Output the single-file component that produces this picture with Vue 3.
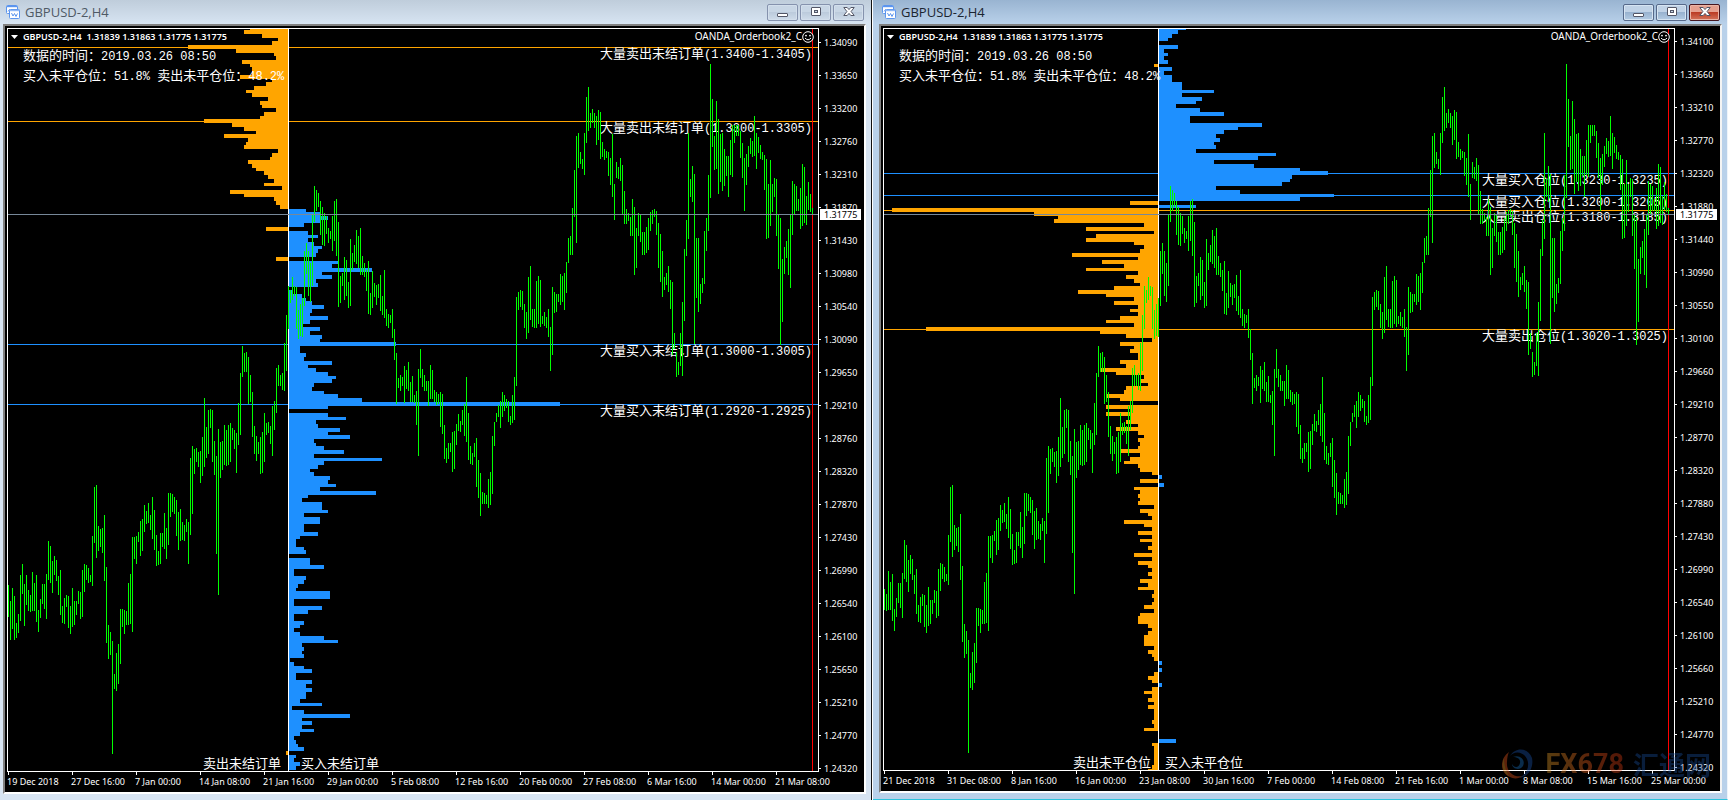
<script setup>
// Candle ranges as [high, low] pairs, three units per plot pixel, measured from `base`.
const candleGroups = [
  { base: 1200, bars: [
    555,651, 603,720, 564,687, 588,720, 669,714, 642,699, 525,663, 492,582, 552,678, 525,615,
    570,633, 585,636, 516,633, 549,633, 525,666, 630,696, 597,654, 552,612, 552,627, 522,657,
    423,540, 438,549, 483,579, 468,525, 480,543, 528,585, 510,645, 618,669, 594,672, 585,621,
    588,684, 618,702, 564,681, 603,675, 603,645, 573,612, 576,657, 510,651, 492,576, 495,540,
    504,549, 525,546, 408,558, 261,429, 255,474, 378,453, 387,441, 384,459, 345,543, 501,729,
    675,777, 696,765, 723,1062, 822,867, 759,873, 732,852, 627,792, 627,681, 630,702, 633,675,
    549,675, 522,672, 411,696, 411,477, 408,492, 396,426, 363,468, 357,453, 315,396, 333,372,
    309,369, 345,390, 291,417, 330,450, 405,498, 453,495, 399,492, 399,441, 339,447, 384,477,
    279,435, 279,351, 282,336, 291,342, 300,408, 336,450, 327,423, 366,420, 375,423, 357,396,
    366,492, 174,405, 138,342, 147,222, 144,186, 156,201, 153,249, 111,228, -6,201, 81,174,
    30,162, 27,84, 30,186, 123,225, 168,462, 87,585, 126,234, 123,210, 75,195, 90,198,
    75,195, 69,186, 84,120, 90,147, 99,219, 9,135, -81,105, -162,-69, -141,-84, -144,-84,
    -129,12, -75,6, -24,111, 78,162, 108,183, 126,162, 111,222, 96,219, 39,186, 69,105,
    66,99, 78,132, 18,168, 3,90, -96,39
  ] },
  { base: 0, bars: [
    1095,1158, 1125,1158, 1119,1170, 1029,1173, 945,1113, 858,987, 871,909, 831,900, 858,888,
    861,987, 930,1017, 912,1008, 894,1011, 753,918, 729,822, 753,888, 789,906, 645,858, 558,666,
    570,633, 579,621, 603,705, 621,735, 639,738, 648,702, 684,729, 693,717, 648,753, 603,723,
    597,768, 666,921, 828,909, 819,858, 771,900, 780,888, 845,924, 717,918, 759,810, 735,786,
    690,792, 708,804, 684,825, 768,825, 789,831, 810,873, 783,942, 879,945, 813,924, 849,891,
    855,915, 852,894, 825,933, 888,945, 810,954, 927,978, 942,984, 945,969, 927,1014, 987,1080,
    1059,1212, 1134,1164, 1125,1173, 1131,1158, 1098,1209, 1110,1167, 1086,1173, 1146,1206,
    1128,1206, 1185,1209, 1173,1275, 1107,1368, 1047,1134, 1107,1161, 1125,1173, 1143,1173,
    1143,1218, 1095,1197, 1110,1197, 1170,1206, 1176,1215, 1182,1212, 1176,1281, 1182,1302,
    1275,1377, 1344,1389, 1329,1377, 1329,1356, 1296,1416, 1293,1407, 1272,1335, 1242,1293,
    1263,1296, 1230,1275, 1212,1308, 1131,1326, 1239,1380, 1338,1392, 1359,1395, 1329,1371,
    1314,1461, 1380,1494, 1419,1548, 1476,1512, 1479,1512, 1485,1512, 1437,1524, 1416,1515,
    1308,1482, 1266,1338, 1239,1266, 1215,1251, 1203,1284, 1176,1251, 1185,1233, 1197,1224,
    1203,1266, 1248,1275, 1185,1269, 1131,1260, 891,1158, 876,930, 870,921, 873,930, 912,984,
    936,1017, 831,999, 798,960, 927,981, 927,984, 843,984, 828,972, 840,981, 948,972, 936,978,
    951,984, 927,1011, 981,1113, 861,1065, 876,939, 882,936, 882,906, 822,915, 828,906, 819,930,
    786,879, 714,789, 708,765, 624,765, 510,651, 408,729, 399,504, 456,492, 477,507, 399,525,
    291,429, 261,393, 339,384, 327,369, 339,384, 348,435, 330,420, 336,477, 426,471, 447,480,
    453,474, 456,528, 474,555, 402,591, 552,660, 486,534, 501,537, 474,543, 495,642, 573,672,
    627,672, 639,663, 651,708, 597,708, 621,825, 684,804, 639,708, 645,726, 696,765, 696,765,
    681,759, 654,750, 636,693, 630,672, 627,651, 633,705, 669,804, 702,846, 753,891, 831,870,
    819,855, 798,876, 840,927, 846,1065, 999,1047, 1056,1131, 1086,1125, 999,1098, 906,1128,
    747,963, 660,768, 399,717, 537,591, 498,606, 522,1032, 714,894, 714,936, 852,912, 834,879,
    693,852, 654,753, 525,693, 192,594, 297,441, 408,510, 303,507, 357,582, 402,546, 399,573,
    447,558, 468,528, 468,591, 420,525, 375,531, 375,429, 375,408, 375,408, 393,474, 429,534,
    474,633, 462,555, 438,501, 414,462, 423,471, 348,468, 399,507, 411,459, 435,477, 456,480,
    465,570, 477,717, 552,714, 480,678, 552,636, 534,591, 537,708, 642,807, 654,1035, 777,966,
    741,822, 723,774, 687,825, 642,864, 543,705, 552,645, 558,633, 597,633, 564,687, 492,678,
    501,669, 588,675, 546,630, 582,636, 624,645
  ] }
]

const candles = candleGroups.flatMap(({ base, bars }) => {
  const out = []
  for (let i = 0; i < bars.length; i += 2) {
    out.push([(bars[i] + base) / 3 - 29, (bars[i + 1] + base) / 3 - 29])
  }
  return out
})

// Order book levels, one per five pips: positive = buy side, negative = sell side.
const orderLevels = [
  -38,-44,-26,-10,-16,
  -100,-52,-14,-12,-46,-38,-36,-36,-48,-16,-22,-34,-42,-36,-20,-28,-26,-12,-24,-28,
  -84,-56,-44,-32,-64,-40,-42,-44,-10,-16,-18,-40,-36,-32,-24,-20,-14,-24,-6,-58,
  -44,-14,-12,-8,17,32,39,31,15,-22,19,29,19,25,33,29,27,-12,49,43,
  83,33,43,27,29,0,3,13,17,23,35,23,21,39,21,14,31,21,33,31,
  107,11,11,17,15,43,19,27,39,47,43,25,23,35,49,73,271,39,0,39,
  57,27,29,51,39,61,25,27,35,55,25,93,35,29,21,25,41,39,47,31,
  87,19,13,33,33,39,15,31,31,15,15,29,11,7,7,15,17,0,21,21,
  35,5,5,17,15,9,7,41,41,5,5,33,19,5,5,15,11,5,11,35,
  49,13,15,13,15,1,5,15,23,7,7,23,17,23,17,17,11,33,3,15,
  61,13,23,13,25,11,5,7,9,15,-2,7,5,11,7
]
const positionLevels = [
  27,19,13,9,0,
  19,5,9,5,9,-4,13,5,13,13,23,23,55,23,43,37,17,41,65,31,
  31,103,79,65,57,61,55,57,37,117,99,55,95,141,169,133,131,123,57,81,
  175,141,-28,37,-266,-124,-100,-104,-14,-72,-4,-62,-72,-24,-14,-18,-86,-20,-56,-34,
  -72,-20,-32,-24,-18,-44,-80,-52,-24,-44,-20,-28,-20,-38,-52,-24,-232,-58,-32,-6,
  -38,-24,-28,-20,-20,-38,-32,-58,-42,-14,-18,-10,-32,-34,-52,-38,0,-52,-28,-52,
  -28,-32,-20,-42,-20,-14,-20,-18,-20,-38,-18,-28,-34,-20,-18,-6,3,-18,5,-24,
  -18,-20,-18,-20,-4,-18,-10,-6,-34,-14,-6,-20,-6,-18,-6,-10,-6,-24,-6,-20,
  -10,-6,-10,-6,-18,-10,-20,-4,-6,-4,-6,-14,-4,-18,-20,-20,-10,-6,-10,-14,
  -14,-14,-4,-10,-6,-4,3,0,3,-4,-10,-6,3,-6,-14,-6,-10,-4,-10,-4,
  -4,-4,-6,-4,-14,0,0,17,-6,-4,-4,-4,-4,-4,-6,-10
]

function levelRects(levels, pitch, axis, height) {
  return levels.flatMap((value, i) => {
    if (!value) return []
    const top = Math.max(0, Math.round(16.1 + (i - 5) * pitch))
    const bottom = Math.min(height, Math.round(16.1 + (i - 4) * pitch))
    return [{
      x: value < 0 ? axis + value : axis + 1,
      y: top,
      w: Math.abs(value),
      h: bottom - top,
      side: value < 0 ? 'sell' : 'buy'
    }]
  })
}

function candlePath(list, scale) {
  const y = (v) => Math.round(185 + (v - 185) * scale)
  return list.map(([high, low], i) => `M${i * 2} ${y(high)}h1V${y(low)}h-1z`).join('')
}

const charts = [
  {
    id: 'orders',
    active: false,
    width: 810,
    height: 742,
    axis: 280,
    nowX: 804,
    rects: levelRects(orderLevels, 3.7155, 280, 742),
    candles: candlePath(candles, 1),
    lines: [
      { y: 18, side: 'sell', name: '大量卖出未结订单', range: '(1.3400-1.3405)' },
      { y: 92, side: 'sell', name: '大量卖出未结订单', range: '(1.3300-1.3305)' },
      { y: 315, side: 'buy', name: '大量买入未结订单', range: '(1.3000-1.3005)' },
      { y: 375, side: 'buy', name: '大量买入未结订单', range: '(1.2920-1.2925)' }
    ],
    sellCaption: '卖出未结订单',
    buyCaption: '买入未结订单',
    prices: ['1.34090', '1.33650', '1.33200', '1.32760', '1.32310', '1.31870', '1.31430', '1.30980', '1.30540', '1.30090', '1.29650', '1.29210', '1.28760', '1.28320', '1.27870', '1.27430', '1.26990', '1.26540', '1.26100', '1.25650', '1.25210', '1.24770', '1.24320'],
    dates: ['19 Dec 2018', '27 Dec 16:00', '7 Jan 00:00', '14 Jan 08:00', '21 Jan 16:00', '29 Jan 00:00', '5 Feb 08:00', '12 Feb 16:00', '20 Feb 00:00', '27 Feb 08:00', '6 Mar 16:00', '14 Mar 00:00', '21 Mar 08:00']
  },
  {
    id: 'positions',
    active: true,
    width: 790,
    height: 741,
    axis: 274,
    nowX: 784,
    rects: levelRects(positionLevels, 3.71, 274, 741),
    candles: candlePath(candles.slice(10), 0.9983),
    lines: [
      { y: 144, side: 'buy', name: '大量买入仓位', range: '(1.3230-1.3235)' },
      { y: 166, side: 'buy', name: '大量买入仓位', range: '(1.3200-1.3205)' },
      { y: 181, side: 'sell', name: '大量卖出仓位', range: '(1.3180-1.3185)' },
      { y: 300, side: 'sell', name: '大量卖出仓位', range: '(1.3020-1.3025)' }
    ],
    sellCaption: '卖出未平仓位',
    buyCaption: '买入未平仓位',
    prices: ['1.34100', '1.33660', '1.33210', '1.32770', '1.32320', '1.31880', '1.31440', '1.30990', '1.30550', '1.30100', '1.29660', '1.29210', '1.28770', '1.28320', '1.27880', '1.27430', '1.26990', '1.26540', '1.26100', '1.25660', '1.25210', '1.24770', '1.24320'],
    dates: ['21 Dec 2018', '31 Dec 08:00', '8 Jan 16:00', '16 Jan 00:00', '23 Jan 08:00', '30 Jan 16:00', '7 Feb 00:00', '14 Feb 08:00', '21 Feb 16:00', '1 Mar 00:00', '8 Mar 08:00', '15 Mar 16:00', '25 Mar 00:00']
  }
]

const percent = (value, total) => `${(value / total) * 100}%`
</script>

<template>
  <main class="desktop">
    <section
      v-for="chart in charts"
      :key="chart.id"
      class="window"
      :class="[chart.id, { active: chart.active }]"
    >
      <header class="titlebar">
        <svg class="app-icon" viewBox="0 0 14 14" aria-hidden="true">
          <rect x="0.5" y="0.5" width="11" height="8" rx="1" fill="#fff" stroke="#5b95ee" />
          <path d="M1 1.5H11" stroke="#5b95ee" stroke-width="1.4" />
          <path d="M2 6.5L3.5 4.5L5 6L6.5 4L8 5.5" fill="none" stroke="#5b95ee" />
          <rect x="3.5" y="4.5" width="10" height="9" rx="1" fill="#fff" stroke="#5b95ee" />
          <path d="M4 5.5H13" stroke="#8fb8f5" stroke-width="1.4" />
          <path d="M5.5 8L7 11L8.5 8.5L10 11.5L11.5 8.5" fill="none" stroke="#5b95ee" />
        </svg>
        <h1 class="title">GBPUSD-2,H4</h1>
        <div class="controls">
          <button type="button" class="control" aria-label="Minimize">
            <svg viewBox="0 0 12 12"><rect x="0.5" y="7.5" width="10" height="3" rx="0.5" class="glyph" /></svg>
          </button>
          <button type="button" class="control" aria-label="Restore">
            <svg viewBox="0 0 12 12">
              <rect x="1.5" y="1.5" width="9" height="8" rx="0.5" class="glyph" />
              <rect x="4.5" y="4.5" width="3" height="2" class="hole" />
            </svg>
          </button>
          <button type="button" class="control close" aria-label="Close">
            <svg viewBox="0 0 12 12">
              <path d="M0.8 1.5H4.2L6 3.6L7.8 1.5H11.2L8.1 5.5L11.2 9.5H7.8L6 7.4L4.2 9.5H0.8L3.9 5.5Z" class="glyph" />
            </svg>
          </button>
        </div>
      </header>

      <div class="client">
        <div class="plot-frame">
          <svg class="layer" :viewBox="`0 0 ${chart.width} ${chart.height}`" preserveAspectRatio="none" aria-hidden="true">
            <rect
              v-for="(r, i) in chart.rects"
              :key="i"
              :x="r.x"
              :y="r.y"
              :width="r.w"
              :height="r.h"
              :class="r.side"
            />
            <rect
              v-for="line in chart.lines"
              :key="line.y"
              x="0"
              :y="line.y"
              :width="chart.width"
              height="1"
              :class="line.side"
            />
            <rect :x="chart.axis" y="0" width="1" :height="chart.height" fill="#fff" />
            <rect :x="chart.nowX" y="0" width="1" :height="chart.height" fill="#f00" />
          </svg>

          <div class="plot-head">
            <svg class="arrow" viewBox="0 0 7 4" aria-hidden="true"><path d="M0 0H7L3.5 4Z" fill="#fff" /></svg>
            <span class="quote">GBPUSD-2,H4&nbsp; 1.31839 1.31863 1.31775 1.31775</span>
            <span class="expert">OANDA_Orderbook2_C</span>
            <svg class="smiley" viewBox="0 0 12 12" aria-hidden="true">
              <circle cx="6" cy="6" r="5.3" fill="#000" stroke="#fff" />
              <circle cx="4" cy="4.6" r="0.9" fill="#fff" />
              <circle cx="8" cy="4.6" r="0.9" fill="#fff" />
              <path d="M3 7Q6 10.5 9 7" fill="none" stroke="#fff" />
            </svg>
          </div>
          <p class="info">数据的时间：<span class="num">2019.03.26 08:50</span></p>
          <p class="info">买入未平仓位：<span class="num">51.8% </span>卖出未平仓位：<span class="num">48.2%</span></p>

          <p
            v-for="line in chart.lines"
            :key="line.range"
            class="level-label"
            :style="{ top: percent(line.y, chart.height) }"
          >{{ line.name }}<span class="num">{{ line.range }}</span></p>
          <p class="caption sell-caption" :style="{ right: percent(chart.width - chart.axis, chart.width) }">{{ chart.sellCaption }}</p>
          <p class="caption buy-caption" :style="{ left: percent(chart.axis, chart.width) }">{{ chart.buyCaption }}</p>

          <svg class="layer" :viewBox="`0 0 ${chart.width} ${chart.height}`" preserveAspectRatio="none" role="img" aria-label="GBPUSD H4">
            <path :d="chart.candles" fill="#0f0" />
            <rect x="0" y="185" :width="chart.width" height="1" fill="#778899" />
          </svg>
        </div>

        <ol class="dates">
          <li v-for="date in chart.dates" :key="date">{{ date }}</li>
        </ol>

        <div class="price-axis">
          <ol class="prices">
            <li v-for="price in chart.prices" :key="price">{{ price }}</li>
          </ol>
          <span class="price-now">1.31775</span>
        </div>

        <div v-if="chart.active" class="watermark">
          <svg class="swirl" viewBox="0 0 32 32" aria-hidden="true">
            <path d="M8 4C-2 11-1 25 9 29C12 31 18 31 22 28C12 30 5 23 6 14C6 10 7 6 8 4Z" fill="#f05a1e" />
            <path d="M3 10C0 18 2 25 8 28C4 22 3 16 3 10Z" fill="#f5a52a" />
            <path d="M9 8C14-1 27-1 31 10C33 20 27 29 18 30C26 26 29 18 26 11C22 3 13 3 9 8Z" fill="#1b55ae" />
            <path d="M12 9C19 6 25 12 22 18C19 23 11 21 11 16C13 20 18 20 19 15C20 11 16 9 12 9Z" fill="#1b75c4" />
          </svg>
          <span class="brand">FX678</span>
          <span class="brand-cn">汇通网</span>
        </div>
      </div>
    </section>
  </main>
</template>

<style>
body {
  margin: 0;
  background: #d7e4f2;
}
</style>

<style scoped>
.desktop {
  display: grid;
  grid-template-columns: minmax(0, 873fr) minmax(0, 855fr);
  height: 100vh;
  min-height: 480px;
  overflow: hidden;
}
.window {
  box-sizing: border-box;
  display: flex;
  flex-direction: column;
  min-width: 0;
  background: #d7e4f2;
}
.orders {
  padding: 0 6px 6px 3px;
  border-right: 1px solid #fff;
  box-shadow: inset -1px 0 #111;
}
.positions {
  padding: 0 5px 6px 6px;
  border-right: 1px solid #eef4fb;
  border-bottom: 1px solid #2fc4dd;
  background: #b9d1ea;
}
.titlebar {
  display: flex;
  align-items: center;
  height: 24px;
  flex: none;
  box-sizing: border-box;
  margin: 0 -5px 0 -3px;
  padding-left: 6px;
  background: linear-gradient(#bfcddb, #d7e4f2);
}
.active .titlebar {
  margin: 0 -5px 0 -6px;
  background: linear-gradient(#99b4d1, #b9d1ea);
  padding-left: 9px;
}
.app-icon {
  width: 14px;
  height: 14px;
}
.title {
  flex: 1;
  margin: 0 0 0 5px;
  font: 400 13px/18px "Open Sans", "Noto Sans", sans-serif;
  color: #4f5a66;
}
.active .title {
  color: #1b2530;
}
.controls {
  display: flex;
  gap: 2px;
  padding-right: 7px;
}
.control {
  display: flex;
  align-items: center;
  justify-content: center;
  box-sizing: border-box;
  width: 31px;
  height: 17px;
  padding: 0;
  border: 1px solid #8592ad;
  border-radius: 2px;
  background: linear-gradient(#c8d6e5 50%, #bccbdc 50%, #cfdcea);
  box-shadow: inset 0 0 0 1px #d3dfec;
}
.active .control {
  border-color: #56698a;
  background: linear-gradient(#c0d2e6 50%, #98b2cf 50%, #b4cce4);
  box-shadow: inset 0 0 0 1px #d6e4f2;
}
.active .close {
  border-color: #451620;
  background: linear-gradient(#e5a08f 45%, #bb3c25 50%, #d4745b);
  box-shadow: inset 0 0 0 1px #eab5a6;
}
.control svg {
  width: 12px;
  height: 12px;
}
.glyph {
  fill: #fff;
  stroke: #535666;
}
.hole {
  fill: #c8d6e5;
  stroke: #535666;
}
.client {
  position: relative;
  flex: 1;
  min-height: 0;
  display: grid;
  grid-template-columns: minmax(0, 1fr) 45px;
  grid-template-rows: minmax(0, 1fr) 20px;
  padding: 2px 0 0 2px;
  border: 2px solid #fff;
  border-top-color: #808080;
  border-left-color: #808080;
  background: #000;
  color: #fff;
  font: 400 9px/11px "Noto Sans", "Open Sans", sans-serif;
}
.active .client {
  border-right-color: #f4f4f4;
}
.plot-frame {
  position: relative;
  border: 1px solid #fff;
  overflow: hidden;
}
.layer {
  position: absolute;
  inset: 0;
  width: 100%;
  height: 100%;
  shape-rendering: crispEdges;
}
.buy {
  fill: #1e90ff;
}
.sell {
  fill: #ffa500;
}
.plot-head {
  position: relative;
  display: flex;
  align-items: center;
  height: 15px;
  margin-bottom: 1px;
  padding: 0 4px 0 3px;
  white-space: nowrap;
}
.arrow {
  width: 7px;
  height: 4px;
  margin-right: 5px;
}
.quote {
  flex: 1;
  font-weight: 600;
}
.expert {
  font-size: 10px;
}
.smiley {
  width: 12px;
  height: 12px;
}
.info,
.level-label,
.caption {
  margin: 0;
  font: 400 13px/12px "Noto Sans CJK SC", sans-serif;
  white-space: pre;
}
.info {
  position: relative;
  height: 20px;
  line-height: 19px;
  padding-left: 15px;
}
.num {
  font-family: "Liberation Mono", monospace;
  font-size: 12px;
}
.level-label {
  position: absolute;
  right: 6px;
}
.caption {
  position: absolute;
  bottom: 2px;
}
.sell-caption {
  margin-right: 7px;
}
.buy-caption {
  margin-left: 13px;
}
.active .buy-caption {
  margin-left: 7px;
}
.dates,
.prices {
  list-style: none;
  margin: 0;
  padding: 0;
}
.dates {
  grid-row: 2;
  grid-column: 1;
  display: flex;
  padding: 0 1px;
}
.dates li {
  position: relative;
  flex: 64 1 0;
  min-width: 0;
  height: 20px;
  line-height: 19px;
  text-indent: -1px;
  white-space: nowrap;
}
.dates li:last-child {
  flex-grow: 42;
}
.active .dates li:last-child {
  flex-grow: 22;
}
.dates li::before {
  content: "";
  position: absolute;
  left: 0;
  top: 0;
  width: 1px;
  height: 3px;
  background: #fff;
}
.price-axis {
  position: relative;
  grid-row: 1 / 3;
  grid-column: 2;
  margin-top: -2px;
}
.prices {
  display: flex;
  flex-direction: column;
  height: 100%;
}
.prices::after {
  content: "";
  flex: 7 1 0;
}
.active .prices::after {
  flex-grow: 6;
}
.prices li {
  position: relative;
  flex: 33 1 0;
  min-height: 0;
  line-height: 33px;
  text-indent: 5px;
}
.active .prices li {
  line-height: 31px;
}
.prices li::before {
  content: "";
  position: absolute;
  left: 0;
  top: 16px;
  width: 2px;
  height: 1px;
  background: #fff;
}
.active .prices li::before {
  top: 15px;
}
.price-now {
  position: absolute;
  left: 1px;
  top: 24%;
  width: 37px;
  margin-top: -1px;
  padding-left: 4px;
  background: #fff;
  color: #000;
}
.watermark {
  position: absolute;
  right: 9px;
  bottom: 10px;
  display: flex;
  align-items: center;
  height: 34px;
  opacity: 0.38;
}
.swirl {
  width: 32px;
  height: 32px;
  margin-right: 13px;
}
.brand {
  font: 700 27px/34px "Roboto", sans-serif;
  background: linear-gradient(90deg, #e8a32b, #ef5a1c 60%, #d93a12);
  background-clip: text;
  color: transparent;
}
.brand-cn {
  margin-left: 9px;
  font: 700 26px/34px "Noto Sans CJK SC", sans-serif;
  color: #1a4f9e;
}
</style>
